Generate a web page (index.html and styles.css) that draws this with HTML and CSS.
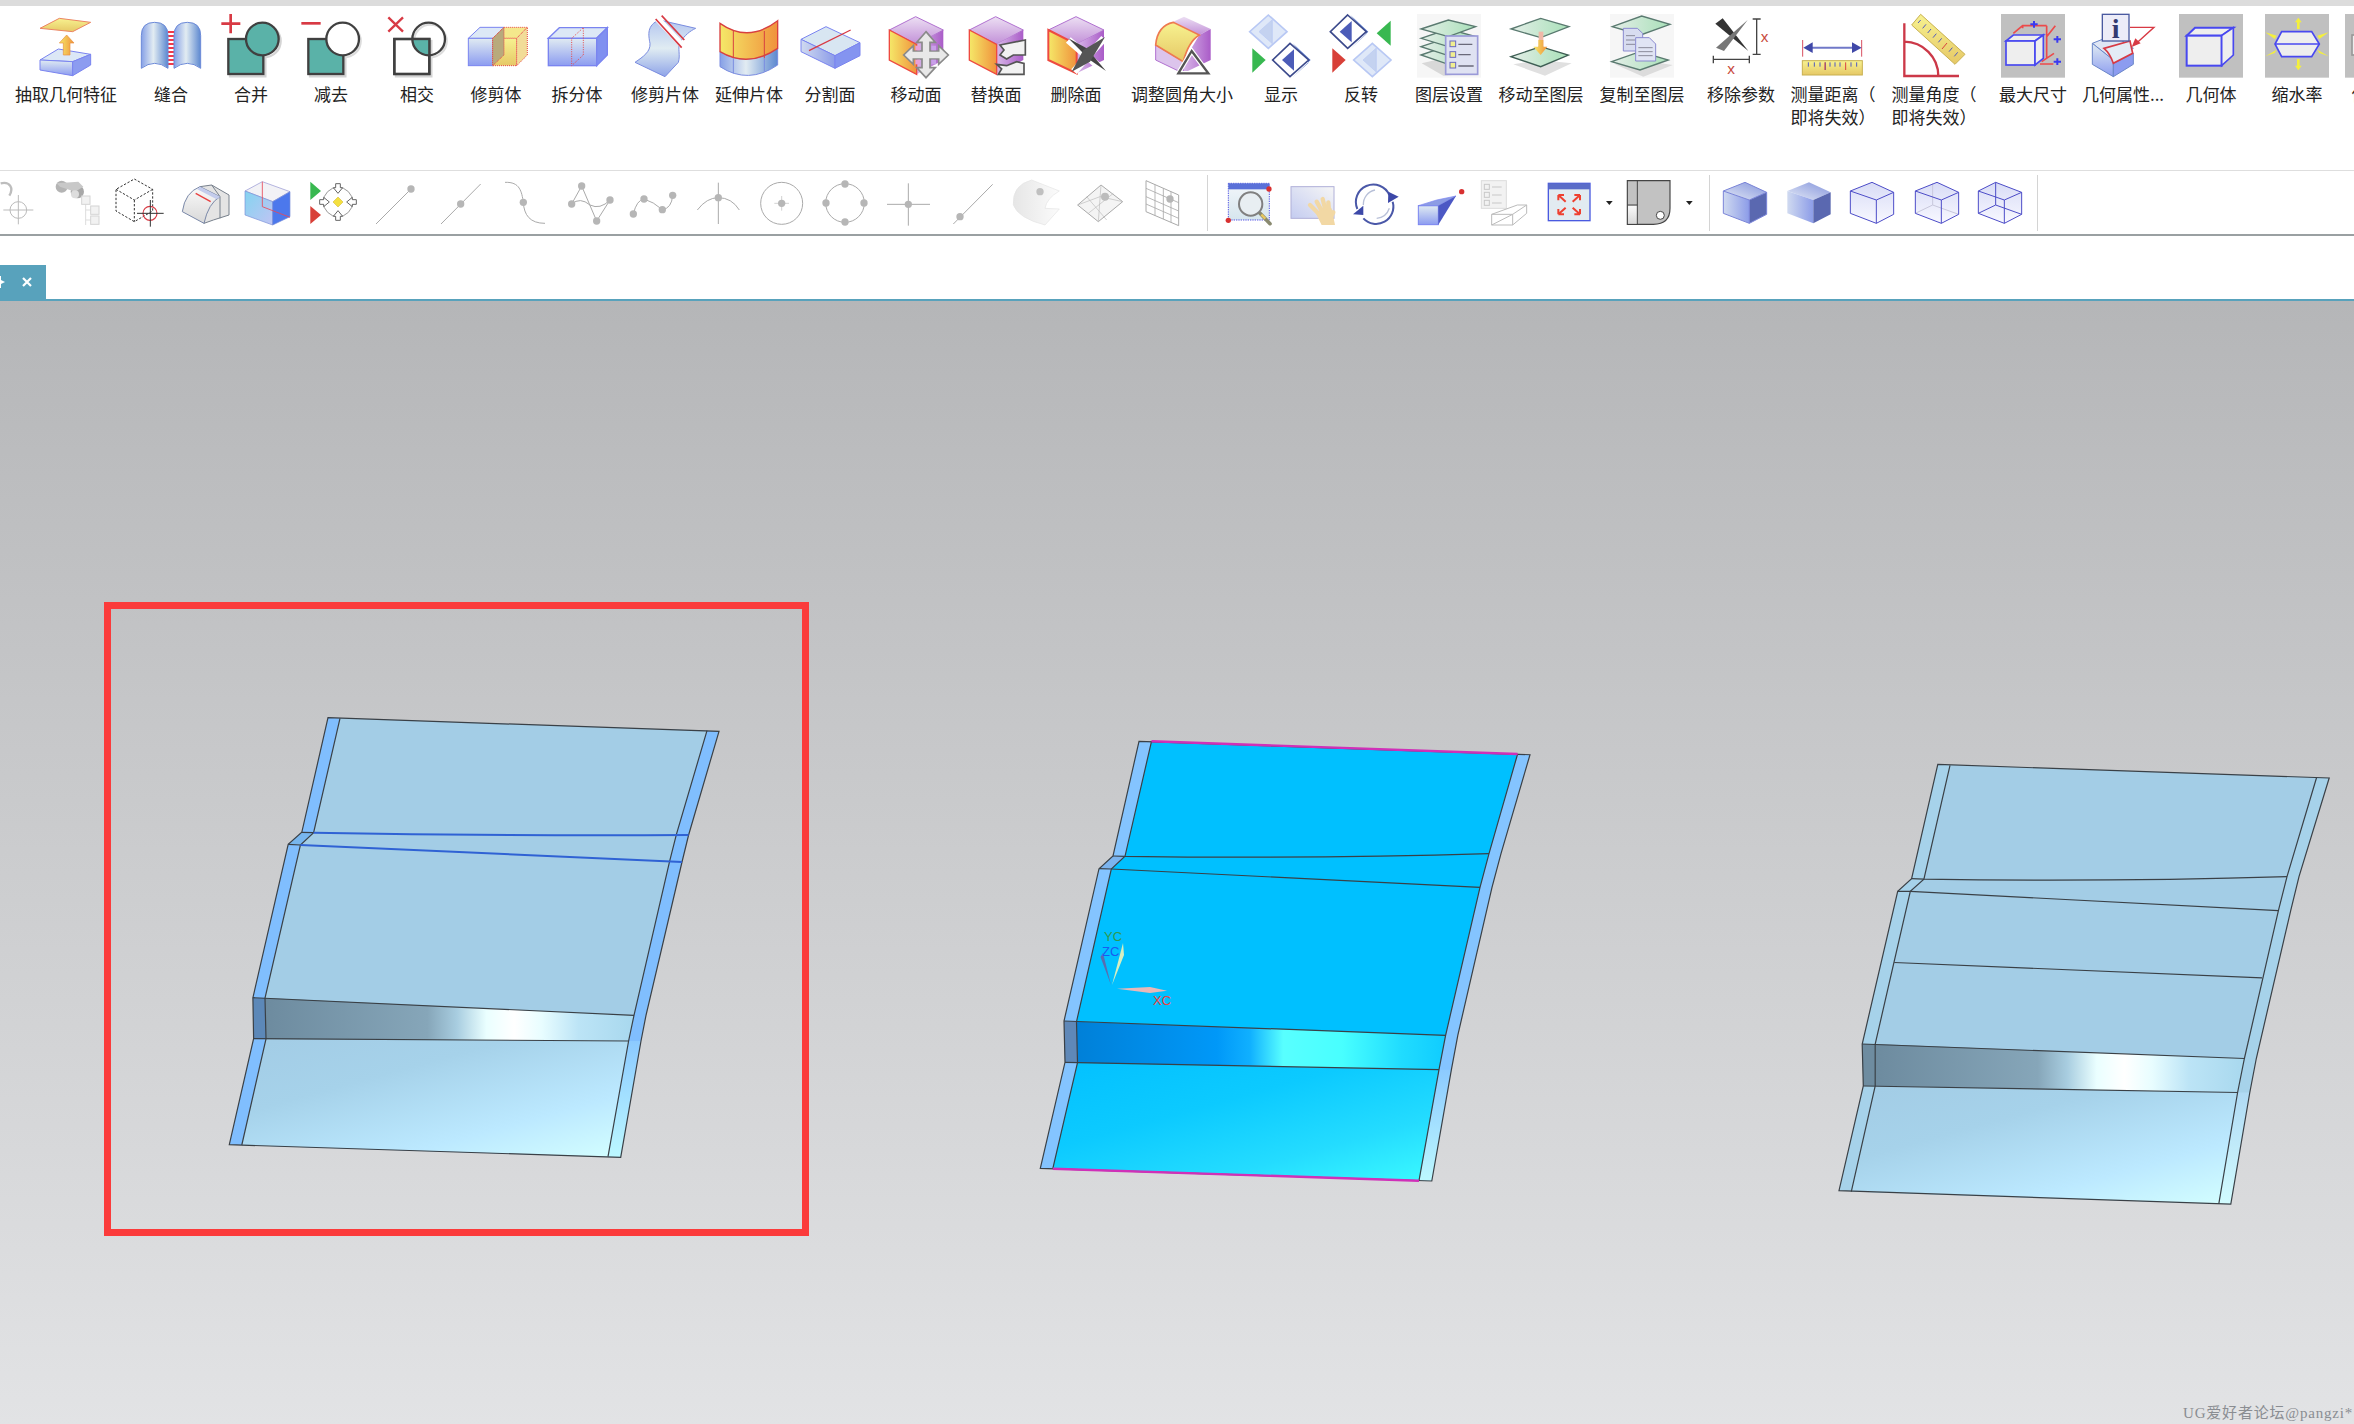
FILE: index.html
```html
<!DOCTYPE html>
<html lang="zh-CN">
<head>
<meta charset="utf-8">
<title>建模</title>
<link rel="stylesheet" href="styles.css">
</head>
<body>
<svg class="defs" aria-hidden="true">
<defs>
<linearGradient id="gFront" x1="0" y1="0" x2="0" y2="1"><stop offset="0" stop-color="#e0ebf2"/><stop offset="1" stop-color="#8c9cf0"/></linearGradient>
<linearGradient id="gSurf" x1="0" y1="0" x2="0" y2="1"><stop offset="0" stop-color="#b4c6f0"/><stop offset=".5" stop-color="#e0ecf2"/><stop offset="1" stop-color="#8ea4e8"/></linearGradient>
<linearGradient id="gCyl" x1="0" y1="0" x2="1" y2="0"><stop offset="0" stop-color="#86a0e6"/><stop offset=".45" stop-color="#e2ecf2"/><stop offset="1" stop-color="#5c88d0"/></linearGradient>
<linearGradient id="gOr" x1="0" y1="0" x2="1" y2="0"><stop offset="0" stop-color="#f5e868"/><stop offset="1" stop-color="#f0923c"/></linearGradient>
<linearGradient id="gPur" x1="0" y1="0" x2="0" y2="1"><stop offset="0" stop-color="#ecdff3"/><stop offset="1" stop-color="#c290d8"/></linearGradient>
<linearGradient id="gPurS" x1="0" y1="0" x2="1" y2="0"><stop offset="0" stop-color="#d8b8e8"/><stop offset="1" stop-color="#aa5cc8"/></linearGradient>
<linearGradient id="gYel" x1="0" y1="0" x2="0" y2="1"><stop offset="0" stop-color="#f7f290"/><stop offset="1" stop-color="#e6c866"/></linearGradient>
<linearGradient id="gGrn" x1="0" y1="0" x2="1" y2="0"><stop offset="0" stop-color="#e4eee8"/><stop offset="1" stop-color="#a8e0b8"/></linearGradient>
<linearGradient id="gGrey" x1="0" y1="0" x2="0" y2="1"><stop offset="0" stop-color="#fafafa"/><stop offset="1" stop-color="#d8d8d8"/></linearGradient>
<linearGradient id="gCubeL" x1="0" y1="0" x2="1" y2="0"><stop offset="0" stop-color="#d0daf0"/><stop offset="1" stop-color="#8c9ce8"/></linearGradient>
<linearGradient id="gCubeT" x1="0" y1="1" x2="1" y2="0"><stop offset="0" stop-color="#e4eaf6"/><stop offset="1" stop-color="#8494dc"/></linearGradient>
<linearGradient id="gLight" x1="0" y1="0" x2="0" y2="1"><stop offset="0" stop-color="#d8dcf6"/><stop offset="1" stop-color="#f8f8ff"/></linearGradient>
<linearGradient id="gFaceLow" x1=".1" y1="0" x2="1" y2="1"><stop offset="0" stop-color="#a3cde6"/><stop offset=".3" stop-color="#a6d2ea"/><stop offset=".7" stop-color="#bce9ff"/><stop offset="1" stop-color="#d4ffff"/></linearGradient>
<linearGradient id="gFaceLow2" x1=".1" y1="0" x2="1" y2="1"><stop offset="0" stop-color="#04c2ff"/><stop offset=".35" stop-color="#0ccaff"/><stop offset=".7" stop-color="#24dcff"/><stop offset="1" stop-color="#3cfaff"/></linearGradient>
<linearGradient id="gBand" x1="0" y1="0" x2="1" y2="0"><stop offset="0" stop-color="#6d8b9f"/><stop offset=".44" stop-color="#86a6b9"/><stop offset=".52" stop-color="#a8cde0"/><stop offset=".6" stop-color="#eaffff"/><stop offset=".675" stop-color="#fff"/><stop offset=".75" stop-color="#e8fdff"/><stop offset=".85" stop-color="#bce4f6"/><stop offset="1" stop-color="#a8d8ee"/></linearGradient>
<linearGradient id="gBand2" x1="0" y1="0" x2="1" y2="0"><stop offset="0" stop-color="#0080d8"/><stop offset=".38" stop-color="#0098f8"/><stop offset=".47" stop-color="#10b0ff"/><stop offset=".56" stop-color="#58ffff"/><stop offset=".72" stop-color="#48ffff"/><stop offset=".88" stop-color="#20dcff"/><stop offset="1" stop-color="#10ccff"/></linearGradient>
<linearGradient id="gStripLow" x1="0" y1="0" x2="0" y2="1"><stop offset="0" stop-color="#8ccaff"/><stop offset="1" stop-color="#bcf8ff"/></linearGradient>
<linearGradient id="gStripLow3" x1="0" y1="0" x2="0" y2="1"><stop offset="0" stop-color="#b0daf4"/><stop offset="1" stop-color="#d2fcff"/></linearGradient>
<g id="pcube">
<polygon points="1168,75 1247,35 1330,75 1250,118" fill="url(#gPur)" stroke="#b070d0" stroke-width="3"/>
<polygon points="1250,118 1330,75 1330,165 1250,208" fill="url(#gPurS)"/>
<polygon points="1168,75 1250,118 1250,208 1168,165" fill="url(#gOr)" stroke="#ee4a40" stroke-width="4"/>
</g>
<g id="dlight">
<polygon points="0,-50 56,0 0,50 -56,0" fill="#dfe8f8" stroke="#b8c8f4" stroke-width="5"/>
<polygon points="12,-36 12,36 -28,0" fill="#c4d2f0" stroke="#b8c8f4" stroke-width="2"/>
</g>
<g id="ddark">
<polygon points="8,-50 62,0 8,52 56,8" fill="#6080d0"/>
<polygon points="0,-50 56,0 0,50 -52,0" fill="#fff" stroke="#3c4a8c" stroke-width="5"/>
<polygon points="12,-32 12,32 -24,0" fill="#4c5cb8"/>
</g>
<g id="bcube">
<polygon points="670,558 735,532 800,562 748,585" fill="url(#gCubeT)"/>
<polygon points="670,558 748,585 748,655 670,625" fill="url(#gCubeL)"/>
<polygon points="748,585 800,562 800,628 748,655" fill="#5a68b0"/>
</g>
<g id="gdot"><circle r="11" fill="#b6b6b6"/></g>
</defs>
</svg>

<div class="app">
<div class="topbar"></div>

<div class="ribbon">
<div class="item"><svg class="ic" viewBox="96 27 204 192"><polygon points="120,165 175,132 272,148 218,170" fill="#dce8f6" stroke="#7a84f0" stroke-width="3"/><polygon points="120,165 218,170 218,212 120,195" fill="url(#gFront)" stroke="#7a84f0" stroke-width="3"/><polygon points="218,170 272,148 272,180 218,212" fill="#8c9cf0" stroke="#7a84f0" stroke-width="3"/><polygon points="120,70 178,40 272,52 218,80" fill="url(#gYel)" stroke="#ec8464" stroke-width="3"/><polygon points="200,90 222,114 210,114 210,150 190,150 190,114 178,114" fill="url(#gOr)" stroke="#e89040" stroke-width="2"/></svg><span class="label">抽取几何特征</span></div>

<div class="item"><svg class="ic" viewBox="411 27 204 192"><line x1="513" y1="78" x2="513" y2="182" stroke="#f03a4a" stroke-width="18" stroke-dasharray="6 6"/><path d="M424,190V92Q424,52 464,52Q504,52 504,92V190Q464,160 424,190Z" fill="url(#gCyl)" stroke="#6c8ad8" stroke-width="3"/><path d="M522,190V92Q522,52 562,52Q602,52 602,92V190Q562,160 522,190Z" fill="url(#gCyl)" stroke="#6c8ad8" stroke-width="3"/></svg><span class="label">缝合</span></div>

<div class="item"><svg class="ic" viewBox="651 27 204 192"><rect x="690" y="108" width="106" height="106" fill="none" stroke="#d4d4d4" stroke-width="7"/><circle cx="793" cy="108" r="49" fill="none" stroke="#d4d4d4" stroke-width="7"/><rect x="685" y="102" width="105" height="105" fill="#5ab2a8" stroke="#404040" stroke-width="7"/><circle cx="787" cy="102" r="49" fill="#5ab2a8" stroke="#404040" stroke-width="7"/><rect x="740" y="102" width="50" height="50" fill="none"/><path d="M692,27V85M664,56H721" stroke="#d83a44" stroke-width="8" fill="none"/></svg><span class="label">合并</span></div>

<div class="item"><svg class="ic" viewBox="891 27 204 192"><rect x="930" y="108" width="106" height="106" fill="none" stroke="#d4d4d4" stroke-width="7"/><circle cx="1033" cy="108" r="49" fill="none" stroke="#dcdcdc" stroke-width="7"/><rect x="925" y="102" width="105" height="105" fill="#5ab2a8" stroke="#404040" stroke-width="7"/><circle cx="1028" cy="102" r="49" fill="#fff" stroke="#404040" stroke-width="7"/><path d="M904,55H962" stroke="#d83a44" stroke-width="8"/></svg><span class="label">减去</span></div>

<div class="item"><svg class="ic" viewBox="1149 27 204 192"><rect x="1188" y="108" width="106" height="106" fill="none" stroke="#d4d4d4" stroke-width="7"/><circle cx="1291" cy="108" r="49" fill="none" stroke="#dcdcdc" stroke-width="7"/><rect x="1183" y="102" width="105" height="105" fill="#fff" stroke="#404040" stroke-width="7"/><path d="M1236,102H1288V151A50,50 0 0 1 1236,102Z" fill="#5ab2a8"/><rect x="1183" y="102" width="105" height="105" fill="none" stroke="#404040" stroke-width="7"/><circle cx="1286" cy="102" r="49" fill="none" stroke="#404040" stroke-width="7"/><path d="M1165,37L1209,80M1209,37L1165,80" stroke="#d83a44" stroke-width="7"/></svg><span class="label">相交</span></div>

<div class="item"><svg class="ic" viewBox="1386 27 204 192"><polygon points="1405,100 1440,67 1512,67 1478,100" fill="#dce8f6" stroke="#7a84f0" stroke-width="3"/><rect x="1405" y="100" width="73" height="82" fill="url(#gFront)" stroke="#7a84f0" stroke-width="3"/><polygon points="1478,100 1512,67 1582,67 1550,100" fill="#f4e88c" stroke="#e84848" stroke-width="3" stroke-dasharray="3 3"/><rect x="1478" y="100" width="72" height="82" fill="url(#gYel)" stroke="#e84848" stroke-width="3" stroke-dasharray="3 3"/><polygon points="1550,100 1582,67 1582,150 1550,182" fill="#f2dc98" stroke="#e84848" stroke-width="3" stroke-dasharray="3 3"/><polygon points="1478,100 1512,67 1512,150 1478,182" fill="#b8aa7c" stroke="#e84848" stroke-width="3" stroke-dasharray="3 3"/></svg><span class="label">修剪体</span></div>

<div class="item"><svg class="ic" viewBox="129 27 204 192"><polygon points="145,100 178,68 322,68 290,100" fill="#dce8f6" stroke="#7a84f0" stroke-width="4"/><rect x="145" y="100" width="145" height="82" fill="url(#gFront)" stroke="#7a84f0" stroke-width="4"/><polygon points="290,100 322,68 322,150 290,182" fill="#8090f0" stroke="#7a84f0" stroke-width="4"/><polygon points="215,100 250,68 250,150 215,182" fill="none" stroke="#e84848" stroke-width="3" stroke-dasharray="3 4"/></svg><span class="label">拆分体</span></div>

<div class="item"><svg class="ic" viewBox="393 27 204 192"><path d="M478,45C440,60 445,90 450,115C452,140 430,155 405,172L495,215L535,172C542,150 532,130 540,112C555,90 570,78 587,70Z" fill="url(#gSurf)" stroke="#7a8ce0" stroke-width="3"/><path d="M460,42L548,135L558,120L475,30Z" fill="#fff"/><path d="M467,42L545,128M485,32L553,105" stroke="#d83a44" stroke-width="5"/></svg><span class="label">修剪片体</span></div>

<div class="item"><svg class="ic" viewBox="645 27 204 192"><path d="M660,140Q745,190 833,130V180Q745,240 660,185Z" fill="url(#gCyl)" stroke="#7a8ce0" stroke-width="3"/><path d="M660,55Q745,115 833,47V130Q745,190 660,140Z" fill="url(#gOr)" stroke="#d84040" stroke-width="4"/><path d="M700,78V160M793,78V160" stroke="#d84040" stroke-width="3"/><path d="M700,160V205M793,160V200" stroke="#7a8ce0" stroke-width="3"/></svg><span class="label">延伸片体</span></div>

<div class="item"><svg class="ic" viewBox="888 27 204 192"><polygon points="903,103 978,65 1080,113 1005,152" fill="#d8e6f2" stroke="#7a84f0" stroke-width="3"/><polygon points="903,103 1005,152 1005,190 903,140" fill="url(#gCubeL)" stroke="#7a84f0" stroke-width="3"/><polygon points="1005,152 1080,113 1080,152 1005,190" fill="#8494f0" stroke="#7a84f0" stroke-width="3"/><path d="M927,137L1052,75" stroke="#d83a44" stroke-width="4"/></svg><span class="label">分割面</span></div>

<div class="item"><svg class="ic" viewBox="1146 27 204 192"><use href="#pcube"/><polygon points="1278,80 1306,112 1290,112 1290,138 1316,138 1316,122 1345,150 1316,178 1316,162 1290,162 1290,188 1306,188 1278,218 1250,188 1266,188 1266,162 1240,162 1240,178 1211,150 1240,122 1240,138 1266,138 1266,112 1250,112" fill="#e8e8e8" stroke="#8a8a8a" stroke-width="5"/><rect x="1246" y="122" width="14" height="14" fill="#e8a0d8"/><rect x="1294" y="122" width="14" height="14" fill="#c8a0e8"/><rect x="1246" y="164" width="14" height="14" fill="#e8a0d8"/><rect x="1294" y="164" width="14" height="14" fill="#c8a0e8"/></svg><span class="label">移动面</span></div>

<div class="item"><svg class="ic" viewBox="1386 27 204 192"><use href="#pcube" x="240"/><polygon points="1500,120 1576,105 1576,150 1540,150 1520,162 1500,150 1512,135" fill="#f2f2f2" stroke="#555" stroke-width="5"/><polygon points="1490,178 1520,182 1550,170 1572,175 1572,208 1495,208 1505,192" fill="#f2f2f2" stroke="#555" stroke-width="5"/></svg><span class="label">替换面</span></div>

<div class="item"><svg class="ic" viewBox="126 27 204 192"><polygon points="145,75 228,35 312,75 230,118" fill="url(#gPur)" stroke="#b070d0" stroke-width="3"/><polygon points="230,118 312,75 312,165 230,205" fill="url(#gPurS)"/><polygon points="145,75 230,118 230,205 145,165" fill="url(#gOr)" stroke="#ee4a40" stroke-width="6"/><path d="M205,105L315,200M312,100L222,200" stroke="#fff" stroke-width="22"/><path d="M205,100L260,130L318,198L270,165Z" fill="#444"/><path d="M315,96L270,170L215,200L250,135Z" fill="#555"/></svg><span class="label">删除面</span></div>

<div class="item"><svg class="ic" viewBox="444 27 204 192"><polygon points="520,50 552,35 632,72 598,90" fill="url(#gPur)"/><polygon points="598,90 632,72 632,165 550,205 550,170" fill="url(#gPurS)"/><polygon points="467,120 550,170 550,205 467,165" fill="#dcc4ec" stroke="#b070d0" stroke-width="3"/><path d="M467,120Q472,62 520,52L598,90Q565,110 550,170Z" fill="url(#gYel)" stroke="#ee7a50" stroke-width="5"/><polygon points="575,138 625,205 535,205" fill="none" stroke="#fff" stroke-width="14"/><polygon points="575,138 625,205 535,205" fill="none" stroke="#555" stroke-width="7"/></svg><span class="label">调整圆角大小</span></div>

<div class="item"><svg class="ic" viewBox="741 27 204 192"><use href="#dlight" transform="translate(805,80)"/><polygon points="757,130 797,165 757,203" fill="#38b850"/><use href="#ddark" transform="translate(870,165)"/></svg><span class="label">显示</span></div>

<div class="item"><svg class="ic" viewBox="981 27 204 192"><use href="#ddark" transform="translate(1043,80)"/><polygon points="1172,47 1130,85 1172,122" fill="#38b850"/><polygon points="997,130 1037,165 997,203" fill="#d84038"/><use href="#dlight" transform="translate(1117,165)"/></svg><span class="label">反转</span></div>

<div class="item"><svg class="ic" viewBox="1245 27 204 192"><rect x="1251" y="27" width="192" height="191" fill="#f6f6f6"/><polygon points="1265,175 1330,160 1420,205 1330,212" fill="#d8d8d8"/><polygon points="1263,150 1345,122 1427,145 1345,178" fill="url(#gGrn)" stroke="#5a7a70" stroke-width="4"/><polygon points="1263,125 1345,98 1427,120 1345,152" fill="url(#gGrn)" stroke="#5a7a70" stroke-width="4"/><polygon points="1263,100 1345,72 1427,95 1345,125" fill="url(#gGrn)" stroke="#5a7a70" stroke-width="4"/><polygon points="1263,72 1345,45 1427,65 1345,95" fill="url(#gGrn)" stroke="#5a7a70" stroke-width="4"/><rect x="1337" y="93" width="96" height="115" fill="#dfe2f2" stroke="#9a9ad8" stroke-width="5"/><g fill="#f0ee90" stroke="#6a6ac0" stroke-width="3"><rect x="1350" y="108" width="17" height="17"/><rect x="1350" y="140" width="17" height="17"/><rect x="1350" y="172" width="17" height="17"/></g><path d="M1375,118H1417M1375,149H1412M1375,183H1421" stroke="#6a6a7a" stroke-width="4"/></svg><span class="label">图层设置</span></div>

<div class="item"><svg class="ic" viewBox="21 27 204 192"><polygon points="40,178 120,165 215,175 135,212" fill="#e0e0e0"/><polygon points="33,72 122,40 207,65 122,98" fill="url(#gGrn)" stroke="#5a7a70" stroke-width="4"/><polygon points="33,155 122,125 205,150 122,185" fill="url(#gGrn)" stroke="#3e5e54" stroke-width="4"/><rect x="116" y="80" width="14" height="45" fill="#f0b8a8"/><polygon points="122,150 100,125 115,125 115,105 130,105 130,125 142,125" fill="url(#gOr)"/></svg><span class="label">移动至图层</span></div>

<div class="item"><svg class="ic" viewBox="324 27 204 192"><rect x="330" y="27" width="192" height="191" fill="#f6f6f6"/><polygon points="345,178 420,165 518,180 430,215" fill="#dcdcdc"/><polygon points="337,65 425,33 510,58 422,90" fill="url(#gGrn)" stroke="#5a7a70" stroke-width="4"/><polygon points="335,170 420,140 505,165 420,195" fill="url(#gGrn)" stroke="#5a7a70" stroke-width="4"/><polygon points="370,70 412,70 428,85 428,138 370,138" fill="#d8dcf0" stroke="#8a8ad0" stroke-width="3"/><polygon points="407,98 448,98 467,117 467,168 407,168" fill="#e0e4f4" stroke="#8a8ad0" stroke-width="3"/><path d="M378,92H405M378,105H405M378,118H405M415,128H458M415,140H458M415,152H458" stroke="#8a8a9a" stroke-width="3"/></svg><span class="label">复制至图层</span></div>

<div class="item"><svg class="ic" viewBox="621 27 204 192"><polygon points="646,56 668,40 745,138" fill="#333"/><polygon points="743,45 672,138 648,128" fill="#777"/><path d="M758,42H782M770,42V148M758,148H782M640,163H748M640,152V175M748,152V175" stroke="#444" stroke-width="4" fill="none"/><text x="782" y="110" class="svgx">x</text><text x="682" y="206" class="svgx">x</text></svg><span class="label">移除参数</span></div>

<div class="item"><svg class="ic" viewBox="897 27 204 192"><path d="M908,105V155M1085,105V155" stroke="#d85060" stroke-width="3"/><path d="M925,128H1070" stroke="#7078c8" stroke-width="6"/><polygon points="910,128 938,112 938,144" fill="#4048a8"/><polygon points="1085,128 1056,112 1056,144" fill="#4048a8"/><rect x="907" y="167" width="180" height="43" fill="url(#gYel)" stroke="#c8b050" stroke-width="3"/><path d="M925,172V185M943,172V185M960,172V185M976,172V195M990,172V185M1005,172V185M1020,172V185M1053,172V185M1070,172V185" stroke="#5058c0" stroke-width="3"/><path d="M975,172V195M1037,172V195" stroke="#d84040" stroke-width="3"/></svg><span class="label">测量距离（<br>即将失效）</span></div>

<div class="item"><svg class="ic" viewBox="1200 27 204 192"><path d="M1213,55V213H1377M1213,110A103,103 0 0 1 1315,213" stroke="#cc3848" stroke-width="7" fill="none"/><polygon points="1235,60 1262,28 1395,148 1365,178" fill="url(#gYel)" stroke="#c8b050" stroke-width="3"/><path d="M1262,45L1254,54M1278,58L1268,70M1293,72L1283,84M1309,86L1299,98M1325,100L1315,112M1357,128L1347,140M1373,142L1363,154" stroke="#5058c0" stroke-width="3"/><path d="M1341,114L1326,132" stroke="#d84040" stroke-width="3"/></svg><span class="label">测量角度（<br>即将失效）</span></div>

<div class="item"><svg class="ic" viewBox="297 27 204 192"><rect x="303" y="27" width="192" height="191" fill="#c0c0c0"/><path d="M340,85L368,62H440M368,62V70M440,62V160M420,177H460M440,95L466,62M425,170L462,145" stroke="#ec4a4a" stroke-width="5" fill="none"/><polygon points="318,108 340,90 430,90 405,108" fill="#eee" stroke="#4848f0" stroke-width="5"/><rect x="318" y="108" width="87" height="72" fill="#eee" stroke="#4848f0" stroke-width="5"/><polygon points="405,108 430,90 430,160 405,180" fill="#eee" stroke="#4848f0" stroke-width="5"/><path d="M391,58H413M402,48V68M461,103H483M472,93V113M461,170H483M472,160V180" stroke="#3a3af0" stroke-width="6"/></svg><span class="label">最大尺寸</span></div>

<div class="item"><svg class="ic" viewBox="567 27 204 192"><polygon points="577,115 640,90 700,130 640,165" fill="#dfe6f4" stroke="#6a86c8" stroke-width="3"/><polygon points="577,115 640,165 640,215 577,178" fill="url(#gFront)" stroke="#6a86c8" stroke-width="3"/><polygon points="640,175 700,145 700,178 640,215" fill="#8c9cf0" stroke="#6a86c8" stroke-width="3"/><path d="M612,130L690,108L698,145L640,175Q630,145 612,130Z" fill="#e4ecf6" stroke="#d83a44" stroke-width="5"/><rect x="607" y="28" width="80" height="80" fill="#ececf8" stroke="#4a5aa0" stroke-width="4"/><text x="647" y="100" class="svgi">i</text><path d="M690,67H762L706,118" stroke="#d83a44" stroke-width="4" fill="none"/><polygon points="695,126 706,100 722,115" fill="#d83a44"/></svg><span class="label">几何属性...</span></div>

<div class="item"><svg class="ic" viewBox="831 27 204 192"><rect x="837" y="27" width="192" height="191" fill="#c0c0c0"/><polygon points="860,92 885,68 1000,68 965,92" fill="#eee" stroke="#4848f0" stroke-width="6"/><rect x="860" y="92" width="105" height="90" fill="#eee" stroke="#4848f0" stroke-width="6"/><polygon points="965,92 1000,68 1000,150 965,182" fill="#eee" stroke="#4848f0" stroke-width="5"/></svg><span class="label">几何体</span></div>

<div class="item"><svg class="ic" viewBox="1089 27 204 192"><rect x="1095" y="27" width="192" height="191" fill="#c0c0c0"/><polygon points="1145,80 1235,80 1258,117 1235,155 1145,155 1125,117" fill="#eee" stroke="#4848f0" stroke-width="5"/><path d="M1125,117H1258" stroke="#4848f0" stroke-width="5"/><g fill="#f4f03c"><polygon points="1195,38 1205,52 1199,52 1199,72 1191,72 1191,52 1185,52"/><polygon points="1195,196 1205,182 1199,182 1199,162 1191,162 1191,182 1185,182"/><polygon points="1096,82 1130,92 1124,102"/><polygon points="1286,82 1252,92 1258,102"/><polygon points="1096,154 1130,134 1124,144"/><polygon points="1286,154 1252,134 1258,144"/></g></svg><span class="label">缩水率</span></div>

<div class="item"><svg class="ic" viewBox="1329 27 204 192"><rect x="1335" y="27" width="192" height="191" fill="#c0c0c0"/><rect x="1356" y="90" width="100" height="60" fill="#eee" stroke="#999" stroke-width="5"/></svg><span class="label">偏置面</span></div>
</div>

<div class="toolbar">
<svg class="tb" viewBox="-42 510 192 168"><path d="M2,535C30,528 42,550 28,572" fill="none" stroke="#bdbdbd" stroke-width="7"/><circle cx="55" cy="615" r="25" fill="none" stroke="#bbb" stroke-width="3"/><path d="M10,615H100M55,570V658" stroke="#bbb" stroke-width="3"/></svg>
<svg class="tb" viewBox="150 510 192 168"><circle cx="185" cy="545" r="18" fill="#b4b4b4"/><circle cx="232" cy="560" r="20" fill="#a8a8a8"/><path d="M170,535L235,530L250,545L225,560L180,545Z" fill="#c8c8c8"/><circle cx="225" cy="568" r="12" fill="#ddd"/><path d="M257,598V660M257,615H272M257,645H272" stroke="#ddd" stroke-width="3"/><g fill="#f2f2f2" stroke="#d4d4d4" stroke-width="3"><rect x="245" y="573" width="25" height="25"/><rect x="272" y="603" width="25" height="25"/><rect x="272" y="633" width="25" height="25"/></g></svg>
<svg class="tb" viewBox="342 510 192 168"><path d="M403,522L458,553V618L403,650L348,618V553ZM348,553L403,585L458,553M403,585V650" fill="none" stroke="#333" stroke-width="3" stroke-dasharray="7 5"/><circle cx="450" cy="625" r="21" fill="none" stroke="#d83a44" stroke-width="3.5"/><path d="M411,625H491M451,585V665" stroke="#333" stroke-width="3"/></svg>
<svg class="tb" viewBox="534 510 192 168"><path d="M600,545L635,540L687,570V630L640,645L612,655Z" fill="#e4e4e4" stroke="#77808c" stroke-width="3"/><path d="M635,540L660,575V640" fill="none" stroke="#77808c" stroke-width="3"/><path d="M547,620Q555,562 600,545L660,575Q625,595 612,655Z" fill="url(#gGrey)" stroke="#7a88a8" stroke-width="3"/><path d="M600,545L660,575L650,583L592,553Z" fill="#c4ccec"/><path d="M587,565L632,590" stroke="#e84040" stroke-width="4"/></svg>
<svg class="tb" viewBox="726 510 192 168"><polygon points="735,558 787,530 870,560 818,590" fill="#f2f2f6" stroke="#9090d0" stroke-width="2"/><linearGradient id="gT4" x1="0" y1="0" x2="1" y2="1"><stop offset="0" stop-color="#84d4f0"/><stop offset="1" stop-color="#c0c4f4"/></linearGradient><polygon points="735,558 818,590 818,660 735,630" fill="url(#gT4)" stroke="#7a90d8" stroke-width="2"/><polygon points="818,590 870,560 870,635 818,660" fill="#4c78ec" stroke="#7a90d8" stroke-width="2"/><path d="M787,530V605L870,637" fill="none" stroke="#e84858" stroke-width="2.5"/></svg>
<svg class="tb" viewBox="918 510 192 168"><polygon points="931,530 963,558 931,585" fill="#38b850"/><polygon points="931,603 963,630 931,657" fill="#d84038"/><circle cx="1014" cy="591" r="44" fill="#fff" stroke="#999" stroke-width="3"/><polygon points="1014,576 1029,591 1014,606 999,591" fill="#f4e040" stroke="#d8c040" stroke-width="2"/><g fill="#fff" stroke="#666" stroke-width="3"><polygon points="1014,565 1000,548 1007,548 1007,536 1021,536 1021,548 1028,548"/><polygon points="1014,617 1000,634 1007,634 1007,646 1021,646 1021,634 1028,634"/><polygon points="988,591 971,577 971,584 959,584 959,598 971,598 971,605"/><polygon points="1040,591 1057,577 1057,584 1069,584 1069,598 1057,598 1057,605"/></g></svg>
<svg class="tb" viewBox="1110 510 192 168"><path d="M1128,657L1233,552" stroke="#aaa" stroke-width="3"/><use href="#gdot" transform="translate(1233,552)"/></svg>
<svg class="tb" viewBox="1302 510 192 168"><path d="M1323,657L1442,537" stroke="#aaa" stroke-width="3"/><use href="#gdot" transform="translate(1382,597)"/></svg>
<svg class="tb" viewBox="-6 510 192 168"><path d="M15,532C60,530 65,560 70,592C72,630 90,655 135,655" fill="none" stroke="#aaa" stroke-width="3"/><use href="#gdot" transform="translate(70,592)"/></svg>
<svg class="tb" viewBox="186 510 192 168"><path d="M215,597L245,543L290,648L330,585M215,597Q240,575 270,600Q300,615 330,585" fill="none" stroke="#aaa" stroke-width="3"/><use href="#gdot" transform="translate(245,543)"/><use href="#gdot" transform="translate(215,597)"/><use href="#gdot" transform="translate(330,585)"/><use href="#gdot" transform="translate(290,648)"/></svg>
<svg class="tb" viewBox="378 510 192 168"><path d="M400,627Q410,585 432,582Q460,590 487,614Q515,610 518,571" fill="none" stroke="#aaa" stroke-width="3"/><use href="#gdot" transform="translate(400,627)"/><use href="#gdot" transform="translate(432,582)"/><use href="#gdot" transform="translate(487,614)"/><use href="#gdot" transform="translate(518,571)"/></svg>
<svg class="tb" viewBox="570 510 192 168"><path d="M655,533V657M592,615Q620,578 655,578Q695,578 718,615" fill="none" stroke="#aaa" stroke-width="3"/><use href="#gdot" transform="translate(655,578)"/></svg>
<svg class="tb" viewBox="762 510 192 168"><circle cx="845" cy="595" r="63" fill="none" stroke="#aaa" stroke-width="3"/><path d="M823,595H867M845,573V617" stroke="#bbb" stroke-width="2"/><use href="#gdot" transform="translate(845,595)"/></svg>
<svg class="tb" viewBox="954 510 192 168"><circle cx="1035" cy="594" r="58" fill="none" stroke="#aaa" stroke-width="3"/><use href="#gdot" transform="translate(1035,537)"/><use href="#gdot" transform="translate(978,594)"/><use href="#gdot" transform="translate(1092,594)"/><use href="#gdot" transform="translate(1035,651)"/></svg>
<svg class="tb" viewBox="1146 510 192 168"><path d="M1161,598H1290M1225,535V662" stroke="#aaa" stroke-width="3"/><use href="#gdot" transform="translate(1225,598)"/></svg>
<svg class="tb" viewBox="1338 510 192 168"><path d="M1360,657L1478,538" stroke="#aaa" stroke-width="3"/><use href="#gdot" transform="translate(1380,635)"/></svg>
<svg class="tb" viewBox="30 510 192 168"><linearGradient id="gT16" x1="0" y1="0" x2="1" y2="0"><stop offset="0" stop-color="#e6e6e6"/><stop offset="1" stop-color="#fbfbfb"/></linearGradient><path d="M95,525L178,558Q140,580 135,610L178,612L135,660Q55,640 40,600Q36,540 95,525Z" fill="url(#gT16)" stroke="#e4e4e4" stroke-width="2"/><circle cx="120" cy="560" r="11" fill="#c0c0c0"/></svg>
<svg class="tb" viewBox="222 510 192 168"><polygon points="233,600 303,540 368,590 295,650" fill="#f4f4f4" stroke="#aaa" stroke-width="3"/><path d="M233,600L300,575L368,590M303,540L295,650M260,575L320,645M340,565L265,625" fill="none" stroke="#bbb" stroke-width="2"/><circle cx="315" cy="575" r="12" fill="#bcbcbc"/></svg>
<svg class="tb" viewBox="414 510 192 168"><polygon points="438,527 536,570 536,662 438,620" fill="#fff" stroke="#aaa" stroke-width="3"/><path d="M438,550L536,593M438,575L536,618M438,597L536,640M465,539V632M490,550V642M513,560V652" stroke="#aaa" stroke-width="2.5"/><use href="#gdot" transform="translate(510,582)"/></svg>
<div class="sep sep-a"></div>
<svg class="tb tb-first" viewBox="648 510 192 168"><linearGradient id="gT19" x1="0" y1="0" x2="0" y2="1"><stop offset="0" stop-color="#f2f6fa"/><stop offset="1" stop-color="#d6e6ee"/></linearGradient><rect x="685" y="535" width="123" height="110" fill="url(#gT19)" stroke="#3838e0" stroke-width="2.5" stroke-dasharray="4 3"/><rect x="685" y="535" width="123" height="18" fill="#5a70d8"/><path d="M780,625L810,656" stroke="#8a8a70" stroke-width="11" stroke-linecap="round"/><path d="M784,629L796,641" stroke="#e8c860" stroke-width="7"/><circle cx="752" cy="597" r="35" fill="#e8eef2" stroke="#808080" stroke-width="6"/><circle cx="807" cy="552" r="8" fill="#d83030"/><circle cx="685" cy="646" r="8" fill="#d83030"/></svg>
<svg class="tb" viewBox="840 510 192 168"><linearGradient id="gT20" x1="0" y1="1" x2="1" y2="0"><stop offset="0" stop-color="#c4ccf0"/><stop offset="1" stop-color="#f6f6f6"/></linearGradient><rect x="873" y="545" width="129" height="95" fill="url(#gT20)" stroke="#b0b0d8" stroke-width="3"/><g stroke="#f2d8a4" stroke-width="13" stroke-linecap="round" fill="none"><path d="M965,635L930,600M972,630L950,590M980,630L968,582M988,630L985,592M990,640L1000,622"/></g><path d="M945,620L995,610L1005,660H965Z" fill="#f2d8a4"/></svg>
<svg class="tb" viewBox="1032 510 192 168"><path d="M1072,612A52,52 0 0 1 1168,570" fill="none" stroke="#4a58a8" stroke-width="6"/><path d="M1178,590A52,52 0 0 1 1090,640" fill="none" stroke="#4a58a8" stroke-width="6"/><path d="M1090,600A44,44 0 0 1 1125,555M1168,610A44,44 0 0 1 1130,640" fill="none" stroke="#b8c0d8" stroke-width="4"/><polygon points="1165,560 1196,575 1164,594" fill="#3c48a8"/><polygon points="1059,628 1090,602 1090,630" fill="#3c48a8"/></svg>
<svg class="tb" viewBox="1224 510 192 168"><rect x="1255" y="602" width="60" height="57" fill="url(#gFront)" stroke="#7a84f0" stroke-width="3"/><polygon points="1255,602 1310,585 1368,573 1315,602" fill="#8c9ce4" stroke="#7a84f0" stroke-width="2"/><polygon points="1315,602 1368,573 1315,659" fill="#4c58c4"/><circle cx="1385" cy="560" r="8" fill="#d83030"/></svg>
<svg class="tb" viewBox="1416 510 192 168"><rect x="1444" y="527" width="75" height="83" fill="#f2f2f2" stroke="#dcdcdc" stroke-width="3"/><g fill="none" stroke="#c8c8c8" stroke-width="3"><rect x="1453" y="538" width="15" height="15"/><rect x="1453" y="562" width="15" height="15"/><rect x="1453" y="586" width="15" height="15"/><path d="M1476,546H1505M1476,570H1505M1476,594H1505"/></g><path d="M1475,628L1552,600H1580V625L1538,660H1475ZM1475,628H1538L1580,600M1538,628V660M1475,660L1538,628" fill="#fff" fill-opacity=".7" stroke="#bbb" stroke-width="3"/></svg>
<svg class="tb" viewBox="108 510 192 168"><rect x="145" y="535" width="125" height="112" fill="#e2ebf1" stroke="#4a5ae0" stroke-width="4"/><rect x="145" y="535" width="125" height="18" fill="#5a6cc8"/><g fill="none" stroke="#ee4030" stroke-width="6"><path d="M175,570H192M175,570V586M175,570L197,590"/><path d="M240,570H223M240,570V586M240,570L218,590"/><path d="M175,628H192M175,628V612M175,628L197,608"/><path d="M240,628H223M240,628V612M240,628L218,608"/></g></svg>
<svg class="dd" viewBox="300 510 54 168"><polygon points="318,588 338,588 328,600" fill="#222"/></svg>
<svg class="tb" viewBox="354 510 192 168"><path d="M382,527H510V610Q510,658 460,658H382Z" fill="#c2c2c2" stroke="#444" stroke-width="3.5"/><rect x="384" y="602" width="28" height="54" fill="url(#gGrey)"/><path d="M382,600H412M412,527V658" stroke="#444" stroke-width="3"/><circle cx="481" cy="631" r="12" fill="#fff" stroke="#444" stroke-width="3"/></svg>
<svg class="dd" viewBox="546 510 54 168"><polygon points="558,588 578,588 568,600" fill="#222"/></svg>
<div class="sep sep-b"></div>
<svg class="tb tb-c" viewBox="639 510 192 168"><use href="#bcube"/><path d="M670,558L735,532L800,562V628L748,655L670,625ZM670,558L748,585L800,562M748,585V655" fill="none" stroke="#7a84d8" stroke-width="3"/></svg>
<svg class="tb" viewBox="831 510 192 168"><use href="#bcube" x="192"/></svg>
<svg class="tb" viewBox="1023 510 192 168"><path d="M1051,558L1116,532L1181,562V628L1129,655L1051,625Z" fill="url(#gLight)"/><path d="M1051,558L1116,532L1181,562V628L1129,655L1051,625ZM1051,558L1129,585L1181,562M1129,585V655" fill="none" stroke="#4c4cc8" stroke-width="3"/></svg>
<svg class="tb" viewBox="1215 510 192 168"><path d="M1246,558L1311,532L1376,562V628L1324,655L1246,625Z" fill="url(#gLight)"/><path d="M1298,535V600M1298,600L1246,625M1298,600L1376,628" fill="none" stroke="#c8c8dc" stroke-width="3"/><path d="M1246,558L1311,532L1376,562V628L1324,655L1246,625ZM1246,558L1324,585L1376,562M1324,585V655" fill="none" stroke="#4c4cc8" stroke-width="3"/></svg>
<svg class="tb" viewBox="207 510 192 168"><path d="M235,558L287,532L365,562V628L313,655L235,625Z" fill="url(#gLight)"/><path d="M235,558L287,532L365,562V628L313,655L235,625ZM235,558L313,585L365,562M313,585V655M287,532V600M287,600L235,625M287,600L365,628" fill="none" stroke="#4c4cc8" stroke-width="3"/></svg>
<div class="sep sep-c"></div>
</div>

<div class="tabstrip">
<div class="tab"><svg class="tab-pin" viewBox="0 0 8 14"><path d="M-3,1H1V5L5,7L1,9V13H-3Z" fill="#fff"/></svg><svg class="tab-x" viewBox="0 0 10 10"><path d="M1,1L9,9M9,1L1,9" stroke="#fff" stroke-width="2.2"/></svg></div>
</div>

<div class="viewport">
<svg class="scene" viewBox="0 301 2354 1123">
<!-- body 1 -->
<polygon points="328,717.7 719,731.3 688.6,835 682,862 646,1015.3 641,1041 620.7,1157.3 229.3,1144.7 253.6,1038.7 252.9,997.7 288.2,844.3 301.8,832.3" fill="#80befe"/>
<polygon points="628.6,1041 641,1041 620.7,1157.3 608,1156.7" fill="url(#gStripLow)"/>
<polygon points="340,718.3 707,730.7 676.4,834.3 669.6,861.3 634,1015.3 628.6,1041 608,1156.7 241.8,1145 266,1039 265,998 300.4,845 313.6,832.7" fill="#a3cde6"/>
<polygon points="266,1039 628.6,1041 608,1156.7 241.8,1145" fill="url(#gFaceLow)"/>
<polygon points="301.8,832.3 313.6,832.7 300.4,845 288.2,844.3" fill="#78b6ee"/>
<polygon points="265,998 634,1015.3 628.6,1041 266,1039" fill="url(#gBand)"/>
<polygon points="252.9,997.7 265,998 266,1039 253.6,1038.7" fill="#5c88b8"/>
<g class="edge">
<polygon points="328,717.7 719,731.3 688.6,835 682,862 646,1015.3 641,1041 620.7,1157.3 229.3,1144.7 253.6,1038.7 252.9,997.7 288.2,844.3 301.8,832.3"/>
<polyline points="340,718.3 313.6,832.7 300.4,845 265,998 266,1039 241.8,1145"/>
<polyline points="707,730.7 676.4,834.3 669.6,861.3 634,1015.3 628.6,1041 608,1156.7"/>
<path d="M252.9,997.7L634,1015.3M253.6,1038.7L628.6,1041M301.8,832.3L313.6,832.7M288.2,844.3L300.4,845"/>
</g>
<g class="edge-blue"><path d="M313.6,832.7Q500,836 688.6,835M300.4,845L682,862"/></g>

<!-- body 2 -->
<polygon points="1139,741.3 1530,754.7 1501,853.7 1492,887.3 1457.8,1035.3 1451.4,1069.7 1431.8,1181 1040.3,1168.3 1065,1062.3 1064,1021 1099,868.7 1113,856" fill="#84c4ff"/>
<polygon points="1439,1069.7 1451.4,1069.7 1431.8,1181 1419,1180.7" fill="url(#gStripLow)"/>
<polygon points="1151.5,741.3 1517.6,754 1489,853.7 1480,887.3 1445.6,1035.3 1439,1069.7 1419,1180.7 1052.8,1168.7 1077.5,1062.7 1076.5,1021.7 1111.3,869 1125,856.3" fill="#00c0ff"/>
<polygon points="1077.5,1062.7 1439,1069.7 1419,1180.7 1052.8,1168.7" fill="url(#gFaceLow2)"/>
<polygon points="1113,856 1125,856.3 1111.3,869 1099,868.7" fill="#7cb4ee"/>
<polygon points="1076.5,1021.7 1445.6,1035.3 1439,1069.7 1077.5,1062.7" fill="url(#gBand2)"/>
<polygon points="1064,1021 1076.5,1021.7 1077.5,1062.7 1065,1062.3" fill="#5f88b8"/>
<g class="edge">
<polygon points="1139,741.3 1530,754.7 1501,853.7 1492,887.3 1457.8,1035.3 1451.4,1069.7 1431.8,1181 1040.3,1168.3 1065,1062.3 1064,1021 1099,868.7 1113,856"/>
<polyline points="1151.5,741.3 1125,856.3 1111.3,869 1076.5,1021.7 1077.5,1062.7 1052.8,1168.7"/>
<polyline points="1517.6,754 1489,853.7 1480,887.3 1445.6,1035.3 1439,1069.7 1419,1180.7"/>
<path d="M1064,1021L1445.6,1035.3M1065,1062.3L1439,1069.7M1113,856L1125,856.3M1099,868.7L1111.3,869M1125,856.3Q1310,859 1489,853.7M1111.3,869L1480,887.3"/>
</g>
<g class="edge-pink"><path d="M1151.5,741.3L1517.6,754M1052.8,1168.7L1419,1180.7"/></g>
<!-- triad -->
<polygon points="1112,985 1123,943 1124,955" fill="#d8eec0"/>
<polygon points="1111,985 1100.5,957 1103,953" fill="#5a6cb0"/>
<polygon points="1117,988.7 1150,987 1167,990.7 1150,993" fill="#e8b8b8"/>
<text x="1104" y="941" class="ax ax-y">YC</text>
<text x="1102" y="956" class="ax ax-z">ZC</text>
<text x="1153" y="1005" class="ax ax-x">XC</text>

<!-- body 3 -->
<polygon points="1937.8,764.4 2329.2,778 2299,876.6 2290.7,910.6 2256.3,1058.5 2249.8,1092.5 2230.8,1204.2 1839,1190.7 1863.3,1086 1862.2,1044 1897.7,891.4 1911.6,878.7" fill="#a6d2ea"/>
<polygon points="2237.6,1092.5 2249.8,1092.5 2230.8,1204.2 2218.8,1203.8" fill="url(#gStripLow3)"/>
<polygon points="1950,765.3 2316.6,777.5 2287,876.6 2278.4,910.6 2244.4,1058.5 2237.6,1092.5 2218.8,1203.8 1851.3,1191.6 1875.2,1086 1875.2,1044 1910.3,891.4 1923.9,879.2" fill="#a3cde6"/>
<polygon points="1875.2,1086 2237.6,1092.5 2218.8,1203.8 1851.3,1191.6" fill="url(#gFaceLow)"/>
<polygon points="1875.2,1044 2244.4,1058.5 2237.6,1092.5 1875.2,1086" fill="url(#gBand)"/>
<polygon points="1862.2,1044 1875.2,1044 1875.2,1086 1863.3,1086" fill="#6e8ca0"/>
<g class="edge">
<polygon points="1937.8,764.4 2329.2,778 2299,876.6 2290.7,910.6 2256.3,1058.5 2249.8,1092.5 2230.8,1204.2 1839,1190.7 1863.3,1086 1862.2,1044 1897.7,891.4 1911.6,878.7"/>
<polyline points="1950,765.3 1923.9,879.2 1910.3,891.4 1875.2,1044 1875.2,1086 1851.3,1191.6"/>
<polyline points="2316.6,777.5 2287,876.6 2278.4,910.6 2244.4,1058.5 2237.6,1092.5 2218.8,1203.8"/>
<path d="M1862.2,1044L2244.4,1058.5M1863.3,1086L2237.6,1092.5M1911.6,878.7L1923.9,879.2M1897.7,891.4L1910.3,891.4M1923.9,879.2Q2110,882 2287,876.6M1910.3,891.4L2278.4,910.6M1894.3,962.5L2262,977.8"/>
</g>
</svg>
<div class="callout"></div>
<div class="mark">UG爱好者论坛@pangzi*</div>
</div>
</div>
</body>
</html>
```

FILE: styles.css
```css
* { box-sizing: border-box; }
html, body { margin: 0; padding: 0; height: 100%; overflow: hidden; background: #fff; }
body { font-family: "Noto Sans CJK SC", "Liberation Sans", sans-serif; }

.defs { position: absolute; width: 0; height: 0; }

.app { display: flex; flex-direction: column; width: 2354px; height: 1424px; overflow: hidden; }

.topbar { height: 6px; background: #dcdcdc; flex: none; }

.ribbon {
  flex: none;
  height: 165px;
  padding-top: 8px;
  display: grid;
  grid-template-columns: 132px 78px 82px 78px 94px 64px 98px 78px 90px 72px 100px 60px 100px 112px 86px 74px 102px 82px 120px 78px 106px 96px 102px 78px 98px 74px 86px;
  align-items: start;
  border-bottom: 1px solid #dedede;
}

.item { display: flex; flex-direction: column; align-items: center; min-width: 0; }

.ic { width: 68px; height: 64px; flex: none; overflow: visible; display: block; }

.label {
  margin-top: 4px;
  font-size: 17px;
  line-height: 23px;
  color: #222;
  white-space: nowrap;
}

.svgx { font-family: "Liberation Sans", sans-serif; font-size: 46px; fill: #c84a3c; }
.svgi { font-family: "Liberation Serif", serif; font-size: 84px; font-weight: 700; fill: #333a70; text-anchor: middle; }

.toolbar {
  flex: none;
  height: 65px;
  padding-top: 4px;
  margin-left: -14px;
  display: flex;
  align-items: flex-start;
  border-bottom: 2px solid #9aa0a2;
  width: 2368px;
}

.tb { width: 64px; height: 56px; flex: none; overflow: visible; display: block; }
.dd { width: 18px; height: 56px; flex: none; overflow: visible; display: block; }

.sep { width: 1px; height: 56px; background: #d4d4d4; flex: none; }
.sep-a { margin-left: 5px; }
.tb-first { margin-left: 8px; }
.sep-b { margin-left: 9px; }
.tb-c { margin-left: 3px; }
.sep-c { margin-left: 4px; }

.tabstrip {
  flex: none;
  height: 65px;
  padding-top: 29px;
  border-bottom: 2px solid #58a2bc;
  background: #fff;
}

.tab {
  width: 46px;
  height: 34px;
  background: #58a2bc;
  display: flex;
  align-items: center;
}
.tab-pin { width: 8px; height: 14px; overflow: visible; }
.tab-x { width: 10px; height: 10px; margin-left: 14px; }

.viewport {
  position: relative;
  flex: 1;
  background: linear-gradient(180deg, #b5b6b8 0%, #e2e3e5 100%);
}

.scene { display: block; width: 2354px; height: 1123px; }

.edge * { fill: none; stroke: #3a4046; stroke-width: 1.2; }
.edge { fill: none; }
.edge-blue * { fill: none; stroke: #2f62d4; stroke-width: 2; }
.edge-pink * { fill: none; stroke: #d030b8; stroke-width: 2.4; }

.ax { font-family: "Liberation Sans", sans-serif; font-size: 13px; }
.ax-y { fill: #2f9a50; }
.ax-z { fill: #1a5cf0; }
.ax-x { fill: #f04040; }

.callout {
  position: absolute;
  left: 104px;
  top: 301px;
  width: 705px;
  height: 634px;
  border: 7px solid #fb3b3b;
}

.mark {
  position: absolute;
  right: 1px;
  bottom: 1px;
  font-family: "Liberation Serif", "Noto Sans CJK SC", serif;
  font-size: 15px;
  line-height: 20px;
  letter-spacing: 0.8px;
  color: #8a8d92;
  white-space: nowrap;
}
```
